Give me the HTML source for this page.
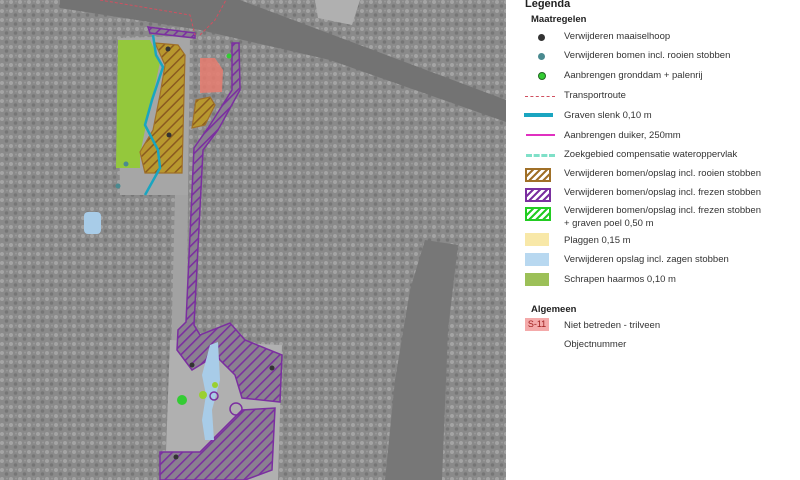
<!DOCTYPE html>
<html><head><meta charset="utf-8"><style>
body{margin:0;width:800px;height:480px;overflow:hidden;background:#fff;font-family:"Liberation Sans",sans-serif}
#map{position:absolute;left:0;top:0;width:506px;height:480px}
#leg{position:absolute;left:506px;top:0;width:294px;height:480px;background:#fff;color:#333;font-size:9.5px}
.r{position:absolute;left:58px;white-space:nowrap}
.s{position:absolute;left:20px}
</style></head><body>
<svg id="map" width="506" height="480" viewBox="0 0 506 480">
<defs>
<pattern id="tex" width="9" height="9" patternUnits="userSpaceOnUse"><rect width="9" height="9" fill="#8a8a8a"/><circle cx="2" cy="2" r="2" fill="#a4a4a4"/><circle cx="6.5" cy="6" r="1.8" fill="#767676"/><circle cx="7" cy="1.5" r="1" fill="#9a9a9a"/></pattern>
<pattern id="hb" width="7" height="7" patternUnits="userSpaceOnUse" patternTransform="rotate(45)"><rect width="7" height="7" fill="#b8982e"/><rect width="1.5" height="7" fill="#8a5a20"/></pattern>
<pattern id="hp" width="7" height="7" patternUnits="userSpaceOnUse" patternTransform="rotate(45)"><rect width="7" height="7" fill="#8a8090"/><rect width="1.6" height="7" fill="#7b2fa0"/></pattern>
</defs>
<rect width="506" height="480" fill="url(#tex)"/>
<path d="M425 240 L458 245 L448 330 L442 480 L385 480 L395 380 L410 290Z" fill="#777"/>
<path d="M60 0 L240 0 L506 100 L506 122 L330 60 L200 30 L60 8Z" fill="#737373"/>
<path d="M315 0 L360 0 L352 25 L318 18Z" fill="#b0b0b0"/>
<path d="M118 38 L190 36 L188 195 L120 195Z" fill="#a6a6a6"/>
<path d="M175 195 L188 195 L186 480 L168 480Z" fill="#a2a2a2"/>
<path d="M170 340 L282 345 L278 480 L165 480Z" fill="#b0b0b0"/>
<path d="M118 40 L150 40 L160 62 L152 100 L145 130 L140 155 L140 168 L116 168Z" fill="#94c83c"/>
<path d="M155 43 L178 45 L185 55 L182 173 L145 173 L140 152 L153 130 L160 95 L165 65Z" fill="url(#hb)" stroke="#a07028" stroke-width="1.2"/>
<path d="M153 35 L156 55 L163 67 L152 100 L145 125 L158 150 L160 168 L145 195" fill="none" stroke="#1aa5c0" stroke-width="2.5"/>
<path d="M200 58 L215 58 L223 70 L222 92 L200 93Z" fill="#e87c70" opacity=".85"/>
<path d="M196 100 L210 97 L215 105 L205 125 L192 128Z" fill="url(#hb)" stroke="#a07028" stroke-width="1.2"/>
<path d="M148 27 L195 33 L195 38 L150 33Z" fill="url(#hp)" stroke="#7b2fa0" stroke-width="1.5"/>
<path d="M232 43 L239 43 L240 90 L218 130 L203 150 L194 325 L200 335 L230 323 L245 340 L282 355 L280 402 L242 398 L235 375 L220 360 L212 345 L205 362 L192 370 L177 350 L178 330 L186 322 L194 148 L210 125 L232 90Z" fill="url(#hp)" stroke="#7b2fa0" stroke-width="1.5"/>
<path d="M160 452 L200 452 L242 410 L275 408 L272 470 L245 480 L160 480Z" fill="url(#hp)" stroke="#7b2fa0" stroke-width="1.5"/>
<path d="M210 345 L218 342 L220 380 L212 410 L214 440 L205 440 L202 420 L206 395 L202 375Z" fill="#a8cce8"/>
<rect x="84" y="212" width="17" height="22" rx="4" fill="#a8cce8"/>
<circle cx="182" cy="400" r="5" fill="#3c3"/><circle cx="203" cy="395" r="4" fill="#9ad030"/><circle cx="215" cy="385" r="3" fill="#9ad030"/>
<circle cx="214" cy="396" r="4" fill="none" stroke="#7b2fa0" stroke-width="1.5"/><circle cx="236" cy="409" r="6" fill="none" stroke="#7b2fa0" stroke-width="1.5"/>
<circle cx="168" cy="49" r="2.5" fill="#333"/><circle cx="169" cy="135" r="2.5" fill="#333"/><circle cx="176" cy="457" r="2.5" fill="#333"/><circle cx="192" cy="365" r="2.5" fill="#333"/><circle cx="272" cy="368" r="2.5" fill="#333"/>
<circle cx="126" cy="164" r="2.5" fill="#4a8a90"/><circle cx="118" cy="186" r="2.5" fill="#4a8a90"/><circle cx="229" cy="56" r="2.5" fill="#3c3"/>
<path d="M100 0 L190 15 L195 35 M200 35 L215 20 L226 0" fill="none" stroke="#d05060" stroke-width="1" stroke-dasharray="3 2"/>
</svg>
<div id="leg">
<div class="r" style="left:19px;top:-2px;font-weight:bold;font-size:11px;color:#222">Legenda</div>
<div class="r" style="left:25px;top:14px;font-weight:bold;color:#222">Maatregelen</div>
<div class="s" style="left:32px;top:34px;width:7px;height:7px;border-radius:50%;background:#333"></div><div class="r" style="top:31px">Verwijderen maaiselhoop</div>
<div class="s" style="left:32px;top:53px;width:7px;height:7px;border-radius:50%;background:#4a8a90"></div><div class="r" style="top:50px">Verwijderen bomen incl. rooien stobben</div>
<div class="s" style="left:32px;top:72px;width:6px;height:6px;border-radius:50%;background:#3c3;border:1px solid #262"></div><div class="r" style="top:70px">Aanbrengen gronddam + palenrij</div>
<div class="s" style="left:19px;top:96px;width:30px;border-top:1px dashed #d05060"></div><div class="r" style="top:90px">Transportroute</div>
<div class="s" style="left:18px;top:113px;width:29px;height:4px;background:#1aa5c0"></div><div class="r" style="top:110px">Graven slenk 0,10 m</div>
<div class="s" style="left:20px;top:134px;width:29px;height:2px;background:#e030c0"></div><div class="r" style="top:130px">Aanbrengen duiker, 250mm</div>
<div class="s" style="left:20px;top:154px;width:29px;border-top:3px dashed #7fe0c8"></div><div class="r" style="top:149px">Zoekgebied compensatie wateroppervlak</div>
<div class="s" style="left:19px;top:168px;width:22px;height:10px;border:2px solid #a07028;background:repeating-linear-gradient(135deg,#fff 0 3px,#a07028 3px 5px)"></div><div class="r" style="top:168px">Verwijderen bomen/opslag incl. rooien stobben</div>
<div class="s" style="left:19px;top:188px;width:22px;height:10px;border:2px solid #7b2fa0;background:repeating-linear-gradient(135deg,#fff 0 3px,#7b2fa0 3px 5px)"></div><div class="r" style="top:187px">Verwijderen bomen/opslag incl. frezen stobben</div>
<div class="s" style="left:19px;top:207px;width:22px;height:10px;border:2px solid #2c2;background:repeating-linear-gradient(135deg,#fff 0 3px,#2c2 3px 5px)"></div><div class="r" style="top:205px">Verwijderen bomen/opslag incl. frezen stobben</div>
<div class="r" style="top:218px">+ graven poel 0,50 m</div>
<div class="s" style="left:19px;top:233px;width:24px;height:13px;background:#f8e8a8"></div><div class="r" style="top:235px">Plaggen 0,15 m</div>
<div class="s" style="left:19px;top:253px;width:24px;height:13px;background:#b8d8f0"></div><div class="r" style="top:254px">Verwijderen opslag incl. zagen stobben</div>
<div class="s" style="left:19px;top:273px;width:24px;height:13px;background:#9cc058"></div><div class="r" style="top:274px">Schrapen haarmos 0,10 m</div>
<div class="r" style="left:25px;top:304px;font-weight:bold;color:#222">Algemeen</div>
<div class="s" style="left:19px;top:318px;width:24px;height:13px;background:#f4aaaa;font-size:9px;color:#a02020;text-align:center;line-height:13px">S-11</div><div class="r" style="top:320px">Niet betreden - trilveen</div>
<div class="r" style="top:339px">Objectnummer</div>
</div>
</body></html>
